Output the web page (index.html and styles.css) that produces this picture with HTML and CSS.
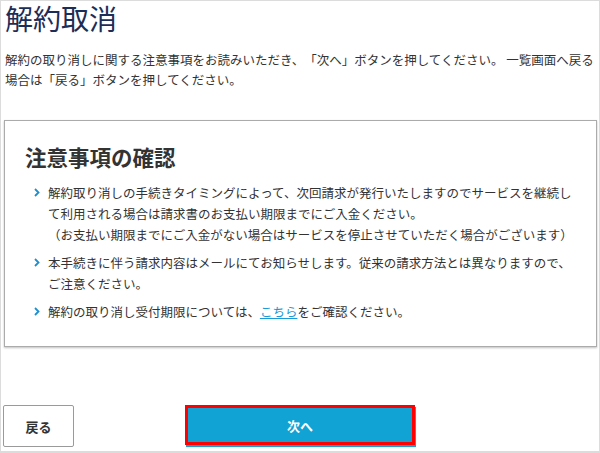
FILE: index.html
```html
<!DOCTYPE html>
<html lang="ja">
<head>
<meta charset="utf-8">
<title>解約取消</title>
<link rel="stylesheet" href="styles.css">
</head>
<body>
<div class="frame">
  <h1 class="title">解約取消</h1>
  <p class="lead">解約の取り消しに関する注意事項をお読みいただき、「次へ」ボタンを押してください。 一覧画面へ戻る<br>場合は「戻る」ボタンを押してください。</p>

  <section class="notice">
    <h2 class="notice-title">注意事項の確認</h2>
    <ul class="notice-list">
      <li class="notice-item">
        <span class="chev"><svg width="6" height="9" viewBox="0 0 6 9"><path d="M1 1 L4.5 4.5 L1 8" fill="none" stroke="#1d8fcf" stroke-width="1.8"/></svg></span>
        <span class="notice-text">解約取り消しの手続きタイミングによって、次回請求が発行いたしますのでサービスを継続し<br>て利用される場合は請求書のお支払い期限までにご入金ください。<br>（お支払い期限までにご入金がない場合はサービスを停止させていただく場合がございます）</span>
      </li>
      <li class="notice-item">
        <span class="chev"><svg width="6" height="9" viewBox="0 0 6 9"><path d="M1 1 L4.5 4.5 L1 8" fill="none" stroke="#1d8fcf" stroke-width="1.8"/></svg></span>
        <span class="notice-text">本手続きに伴う請求内容はメールにてお知らせします。従来の請求方法とは異なりますので、<br>ご注意ください。</span>
      </li>
      <li class="notice-item">
        <span class="chev"><svg width="6" height="9" viewBox="0 0 6 9"><path d="M1 1 L4.5 4.5 L1 8" fill="none" stroke="#1d8fcf" stroke-width="1.8"/></svg></span>
        <span class="notice-text">解約の取り消し受付期限については、<a class="link" href="#">こちら</a>をご確認ください。</span>
      </li>
    </ul>
  </section>

  <div class="actions">
    <button class="btn-back" type="button">戻る</button>
    <button class="btn-next" type="button">次へ</button>
  </div>
</div>
</body>
</html>
```

FILE: styles.css
```css
* { box-sizing: border-box; }
html, body { margin: 0; padding: 0; background: #fff; }
body {
  font-family: "Noto Sans CJK JP", "Noto Sans", sans-serif;
  color: #333;
  text-spacing-trim: space-all;
}
.frame {
  width: 600px;
  height: 453px;
  border: 1px solid #dcdcdc;
  border-bottom-width: 2px;
  padding: 0 2px 0 3px;
}
.title {
  margin: 0 0 0 1px;
  font-size: 28px;
  line-height: 34px;
  font-weight: normal;
  color: #1c2d57;
}
.lead {
  margin: 15px 0 0 1px;
  font-size: 12.5px;
  line-height: 20px;
  white-space: nowrap;
  color: #333;
}
.notice {
  margin-top: 30px;
  height: 227px;
  border: 1px solid #ababab;
  box-shadow: 0 1px 2px rgba(0,0,0,0.25);
  padding: 22px 10px 0 20px;
}
.notice-title {
  margin: 0;
  font-size: 21.5px;
  line-height: 28px;
  font-weight: bold;
  color: #333;
}
.notice-list {
  list-style: none;
  margin: 11px 0 0 0;
  padding: 0;
}
.notice-item {
  display: flex;
  align-items: flex-start;
  gap: 8px;
  font-size: 12.5px;
  line-height: 21px;
  white-space: nowrap;
}
.notice-item + .notice-item { margin-top: 7px; }
.chev {
  margin-left: 9px;
  width: 6px;
  height: 21px;
  display: flex;
  align-items: center;
  flex: none;
}
.chev svg { display: block; }
.link {
  color: #1a9ad6;
  text-decoration: underline;
}
.actions {
  display: flex;
  align-items: flex-start;
  gap: 111px;
  margin-top: 58px;
  margin-left: -1px;
}
.btn-back {
  width: 71px;
  height: 42px;
  border: 1px solid #9a9a9a;
  border-radius: 2px;
  background: #fff;
  font-family: inherit;
  font-size: 13px;
  font-weight: bold;
  color: #333;
  padding: 0;
}
.btn-next {
  width: 230px;
  height: 40px;
  border: 3px solid #ff0000;
  background: #10a3d4;
  box-shadow: 1px 2px 0 #18a0d2;
  font-family: inherit;
  font-size: 13px;
  font-weight: bold;
  color: #fff;
  padding: 0;
}
```
